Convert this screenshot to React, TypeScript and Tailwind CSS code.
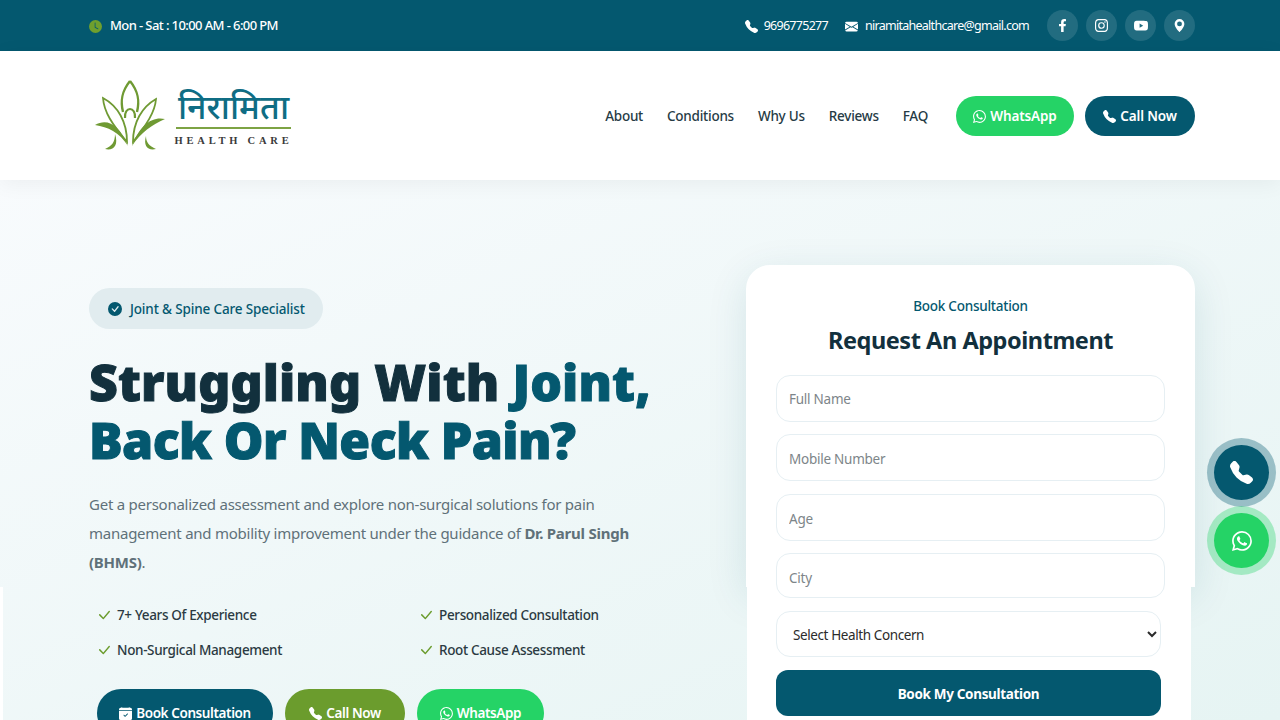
import { FaFacebookF } from "react-icons/fa";
import {
  BsCalendarCheckFill,
  BsCheckCircleFill,
  BsCheckLg,
  BsClockFill,
  BsEnvelopeFill,
  BsGeoAltFill,
  BsInstagram,
  BsTelephoneFill,
  BsWhatsapp,
  BsYoutube,
} from "react-icons/bs";

const font = "font-['Noto_Sans','Open_Sans',sans-serif]";

const Logo = () => (
  <div className="flex items-center gap-[10px]">
    <svg width="72" height="72" viewBox="0 0 72 72" fill="none" stroke="#6f9a33" strokeWidth="1.8">
      {/* top leaf */}
      <path d="M36 1C28 11 26 20 29 32M36 1C44 11 46 20 43 32" strokeWidth="2.4" />
      {/* figure head */}
      <path d="M31 38C30 26 42 26 41 38" strokeWidth="2.2" />
      {/* upper side leaves */}
      <path d="M9 18C10 32 18 44 33 62C33 42 24 26 9 18Z" />
      <path d="M62 19C61 32 53 44 39 62C39 42 48 27 62 19Z" />
      {/* lower side leaves, drawn as crescents */}
      <path d="M1 45C13 38 25 44 34 66C25 52 14 47 1 45Z" fill="#6f9a33" stroke="none" />
      <path d="M71 39C59 36 46 44 38 66C47 52 58 45 71 39Z" fill="#6f9a33" stroke="none" />
      {/* small bottom leaves */}
      <path d="M21 54C21 62 18 66 11 69C19 71 25 66 21 54Z" fill="#6f9a33" stroke="none" />
      <path d="M52 56C52 62 55 66 62 69C54 71 49 66 52 56Z" fill="#6f9a33" stroke="none" />
    </svg>
    <div className="mt-[13px] flex w-[115px] flex-col items-center">
      <span className="font-['Noto_Sans_Devanagari','Noto_Sans',serif] text-[34px] leading-[29px] font-medium whitespace-nowrap text-[#0f6d84]">
        निरामिता
      </span>
      <div className="mt-[1px] h-[2px] w-full bg-[#7da344]" />
      <span className="mt-[6px] whitespace-nowrap font-['Liberation_Serif',serif] text-[10.5px] leading-[12px] font-bold tracking-[0.36em] text-[#3a3a3a]">
        HEALTH CARE
      </span>
    </div>
  </div>
);

const Social = ({ children }: { children: React.ReactNode }) => (
  <a className="flex h-[31px] w-[31px] items-center justify-center rounded-full bg-white/12 text-[13px] text-white">
    {children}
  </a>
);

const Field = ({ placeholder, className }: { placeholder: string; className: string }) => (
  <input
    placeholder={placeholder}
    className={`w-full rounded-[14px] border border-[#e6eff3] bg-white px-[12px] text-[13.5px] tracking-[-0.25px] text-[#333] outline-none placeholder:text-[#7d8589] ${className}`}
  />
);

const Check = ({ label }: { label: string }) => (
  <div className="flex items-center gap-[5px] text-[13.5px] font-medium tracking-[-0.35px] text-[#2b3a42]">
    <BsCheckLg className="text-[16px] text-[#6b9c2d]" />
    {label}
  </div>
);

export default function App() {
  return (
    <div className={`relative h-[720px] w-[1280px] overflow-hidden bg-white ${font}`}>
      {/* top bar */}
      <div className="flex h-[51px] items-center justify-between bg-[#04586f] pr-[85px] pl-[89px] text-white">
        <div className="flex items-center gap-[8px] pt-[1px] text-[13px] font-medium tracking-[-0.6px]">
          <BsClockFill className="text-[13px] text-[#6f9f2e]" />
          Mon - Sat : 10:00 AM - 6:00 PM
        </div>
        <div className="flex items-center text-[12.5px] tracking-[-0.72px]">
          <span className="flex items-center gap-[6px] pt-[1px]">
            <BsTelephoneFill className="text-[13px]" />
            9696775277
          </span>
          <span className="ml-[17px] flex items-center gap-[7px] pt-[1px]">
            <BsEnvelopeFill className="text-[13px]" />
            niramitahealthcare@gmail.com
          </span>
          <div className="ml-[18px] flex gap-[8px]">
            <Social>
              <FaFacebookF />
            </Social>
            <Social>
              <BsInstagram />
            </Social>
            <Social>
              <BsYoutube className="text-[14px]" />
            </Social>
            <Social>
              <BsGeoAltFill />
            </Social>
          </div>
        </div>
      </div>

      {/* header */}
      <header className="relative z-10 flex h-[129px] items-center justify-between bg-white pr-[85px] pl-[94px] shadow-[0_4px_20px_rgba(0,0,0,0.05)]">
        <Logo />
        <div className="mt-[1px] flex items-center">
          <nav className="flex gap-[24px] pt-[1px] text-[13.5px] font-medium tracking-[-0.25px] text-[#263b45]">
            <a>About</a>
            <a>Conditions</a>
            <a>Why Us</a>
            <a>Reviews</a>
            <a>FAQ</a>
          </nav>
          <a className="ml-[28px] flex h-[40px] w-[118px] items-center justify-center gap-[4px] rounded-full bg-[#25d366] pt-[1px] text-[13.5px] font-semibold tracking-[-0.15px] text-white">
            <BsWhatsapp className="text-[13px]" />
            WhatsApp
          </a>
          <a className="ml-[11px] flex h-[40px] w-[110px] items-center justify-center gap-[4px] rounded-full bg-[#04586f] pt-[1px] text-[13.5px] font-semibold tracking-[-0.15px] text-white">
            <BsTelephoneFill className="text-[13px]" />
            Call Now
          </a>
        </div>
      </header>

      {/* hero */}
      <section className="flex h-[540px] justify-between bg-gradient-to-br from-[#f8fbfd] to-[#e6f4f3] pt-[85px] pr-[85px] pl-[89px]">
        <div className="w-[600px] pt-[23px]">
          <div className="inline-flex h-[41px] items-center gap-[8px] rounded-full bg-[#e1ecef] pt-[1px] pr-[18px] pl-[19px] text-[13.5px] font-medium tracking-[-0.15px] text-[#04586f]">
            <BsCheckCircleFill className="text-[14px]" />
            Joint &amp; Spine Care Specialist
          </div>
          <h1 className="mt-[24px] text-[50px] leading-[58px] font-black whitespace-nowrap text-[#12303d] [-webkit-text-stroke:1px_currentColor]">
            <span className="tracking-[0.1px]">
              Struggling With <span className="text-[#04586f]">Joint,</span>
            </span>
            <br />
            <span className="tracking-[-0.6px] text-[#04586f]">Back Or Neck Pain?</span>
          </h1>
          <p className="mt-[21px] w-[560px] text-[15px] leading-[29px] tracking-[-0.25px] text-[#5f7179]">
            Get a personalized assessment and explore non-surgical solutions for pain management and mobility
            improvement under the guidance of <strong className="font-bold">Dr. Parul Singh (BHMS)</strong>.
          </p>
          <div className="mt-[28px] ml-[7px] grid w-[530px] grid-cols-[322px_1fr] gap-y-[15px]">
            <Check label="7+ Years Of Experience" />
            <Check label="Personalized Consultation" />
            <Check label="Non-Surgical Management" />
            <Check label="Root Cause Assessment" />
          </div>
          <div className="mt-[28px] ml-[8px] flex gap-[12px] text-[13.5px] font-semibold tracking-[-0.4px] text-white">
            <a className="flex h-[48px] w-[176px] items-center justify-center gap-[4px] rounded-full bg-[#04586f] pt-[2px]">
              <BsCalendarCheckFill className="text-[13px]" />
              Book Consultation
            </a>
            <a className="flex h-[48px] w-[120px] items-center justify-center gap-[4px] rounded-full bg-[#6b9c2d] pt-[2px]">
              <BsTelephoneFill className="text-[13px]" />
              Call Now
            </a>
            <a className="flex h-[48px] w-[127px] items-center justify-center gap-[4px] rounded-full bg-[#25d366] pt-[2px]">
              <BsWhatsapp className="text-[13px]" />
              WhatsApp
            </a>
          </div>
        </div>

        {/* appointment form */}
        <div className="w-[449px]">
          <div className="h-[322px] rounded-t-[24px] bg-white px-[30px] pt-[32px] shadow-[0_10px_40px_rgba(4,88,111,0.12)]">
            <p className="text-center text-[13.5px] leading-[19px] font-medium tracking-[-0.25px] text-[#04586f]">
              Book Consultation
            </p>
            <h2 className="mt-[6px] text-center text-[23.5px] leading-[36px] font-bold tracking-[-0.45px] text-[#12303d]">
              Request An Appointment
            </h2>
            <div className="mt-[17px] flex flex-col gap-[12.3px]">
              <Field placeholder="Full Name" className="h-[47px] pt-[1px]" />
              <Field placeholder="Mobile Number" className="h-[47px] pt-[2px]" />
              <Field placeholder="Age" className="h-[47px] pt-[3px]" />
              <Field placeholder="City" className="relative z-10 h-[45px] pt-[5px]" />
            </div>
          </div>
          <div className="ml-[1px] h-[140px] w-[444px] bg-white pt-[24px] pl-[29px]">
            <select className="h-[46px] w-[385px] rounded-[14px] border border-[#e6eff3] bg-white px-[12px] pt-[1px] text-[13.5px] tracking-[-0.4px] text-[#2b2b2b] outline-none">
              <option>Select Health Concern</option>
            </select>
            <button className="mt-[13px] h-[46px] w-[385px] rounded-[12px] bg-[#04586f] pt-[2px] text-[13.5px] font-bold tracking-[-0.33px] text-white">
              Book My Consultation
            </button>
          </div>
        </div>
      </section>

      {/* seam strip on the left edge */}
      <div className="absolute top-[587px] bottom-0 left-0 w-[3px] bg-white" />

      {/* floating buttons */}
      <a className="absolute top-[445px] left-[1214px] flex h-[55px] w-[55px] items-center justify-center rounded-full bg-[#04586f] text-[23px] text-white shadow-[0_0_0_7px_rgba(4,88,111,0.35)]">
        <BsTelephoneFill />
      </a>
      <a className="absolute top-[513px] left-[1214px] flex h-[55px] w-[55px] items-center justify-center rounded-full bg-[#25d366] text-[20px] text-white shadow-[0_0_0_7px_rgba(37,211,102,0.35)]">
        <BsWhatsapp />
      </a>
    </div>
  );
}
